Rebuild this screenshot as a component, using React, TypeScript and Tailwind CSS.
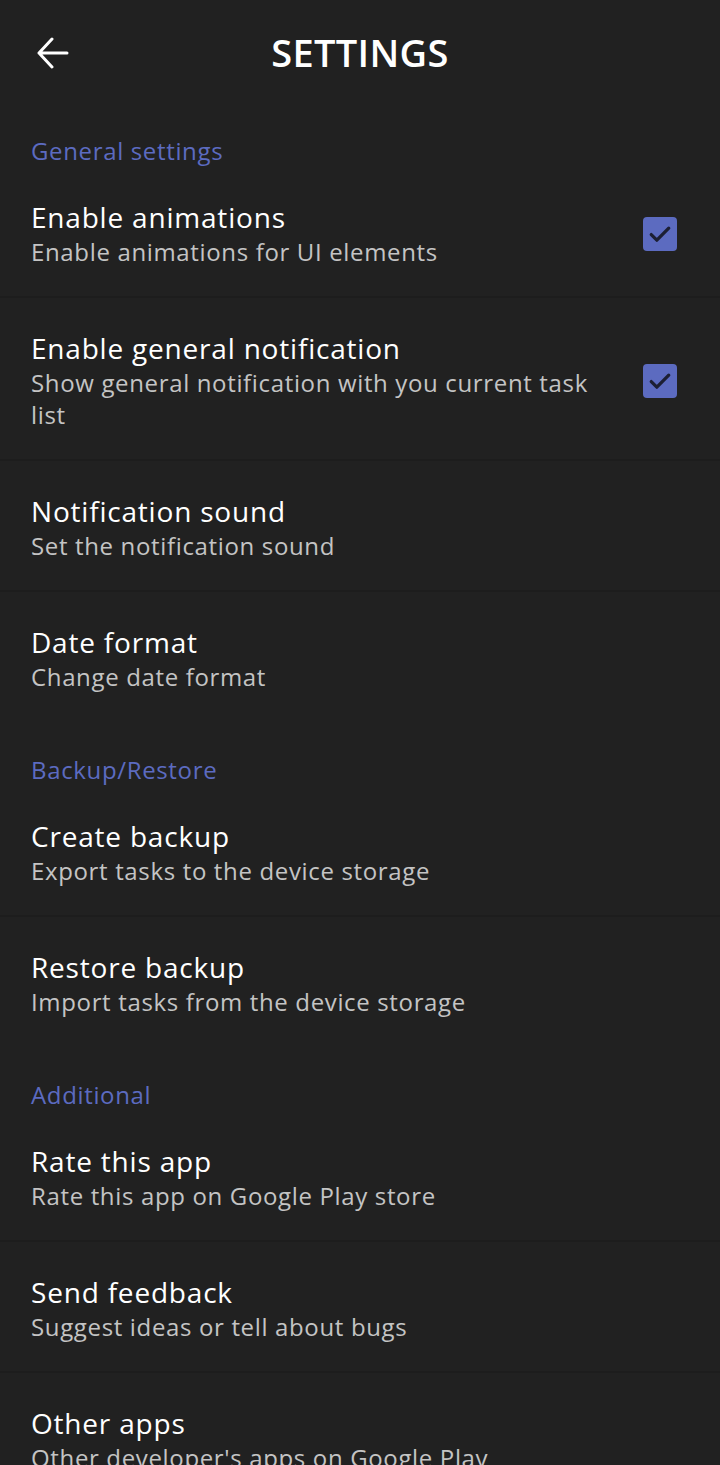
type Item = {
  title: string;
  subtitle: string;
  checked?: boolean;
};

type Section = {
  header: string;
  items: Item[];
};

const sections: Section[] = [
  {
    header: "General settings",
    items: [
      { title: "Enable animations", subtitle: "Enable animations for UI elements", checked: true },
      {
        title: "Enable general notification",
        subtitle: "Show general notification with you current task list",
        checked: true,
      },
      { title: "Notification sound", subtitle: "Set the notification sound" },
      { title: "Date format", subtitle: "Change date format" },
    ],
  },
  {
    header: "Backup/Restore",
    items: [
      { title: "Create backup", subtitle: "Export tasks to the device storage" },
      { title: "Restore backup", subtitle: "Import tasks from the device storage" },
    ],
  },
  {
    header: "Additional",
    items: [
      { title: "Rate this app", subtitle: "Rate this app on Google Play store" },
      { title: "Send feedback", subtitle: "Suggest ideas or tell about bugs" },
      { title: "Other apps", subtitle: "Other developer's apps on Google Play" },
    ],
  },
];

const Checkbox = () => (
  <div className="w-[34px] h-[34px] rounded-[4px] bg-[#5c6bc0] flex items-center justify-center shrink-0">
    <svg width="28" height="28" viewBox="0 0 24 24" fill="none">
      <path
        d="M4.5 12.5l4.8 4.8L19.5 7"
        stroke="#1c1f33"
        strokeWidth="2.8"
        strokeLinecap="round"
        strokeLinejoin="round"
      />
    </svg>
  </div>
);

const Row = ({ item, last }: { item: Item; last: boolean }) => (
  <div
    className={`flex items-center pl-[31px] pr-[43px] pt-[33px] pb-[28px] border-b-2 ${
      last ? "border-transparent" : "border-[#1d1d1d]"
    }`}
  >
    <div className="flex-1 min-w-0 pr-[32px]">
      <div className="text-[28px] leading-[34px] tracking-[0.8px] text-white">{item.title}</div>
      <div className="mt-[2px] text-[24px] leading-[32px] tracking-[0.65px] text-[#c4c4c4]">
        {item.subtitle}
      </div>
    </div>
    {item.checked && <Checkbox />}
  </div>
);

export default function App() {
  return (
    <div
      className="w-[720px] h-[1465px] overflow-hidden bg-[#212121]"
      style={{ fontFamily: "'Open Sans', 'Noto Sans', sans-serif" }}
    >
      {/* Toolbar */}
      <div className="relative h-[104px] flex items-center justify-center">
        <svg
          className="absolute left-[36px] top-[37px]"
          width="34"
          height="32"
          viewBox="0 0 34 32"
          fill="none"
        >
          <path
            d="M3 16h28M16 2L3 16l13 14"
            stroke="white"
            strokeWidth="3"
            strokeLinecap="round"
            strokeLinejoin="round"
          />
        </svg>
        <h1 className="text-[38px] font-semibold tracking-[0.3px] text-white">SETTINGS</h1>
      </div>

      {sections.map((section) => (
        <div key={section.header}>
          <div className="pl-[31px] pt-[31px] text-[24px] leading-[32px] tracking-[0.65px] text-[#5c6bc0]">
            {section.header}
          </div>
          {section.items.map((item, i) => (
            <Row key={item.title} item={item} last={i === section.items.length - 1} />
          ))}
        </div>
      ))}
    </div>
  );
}
